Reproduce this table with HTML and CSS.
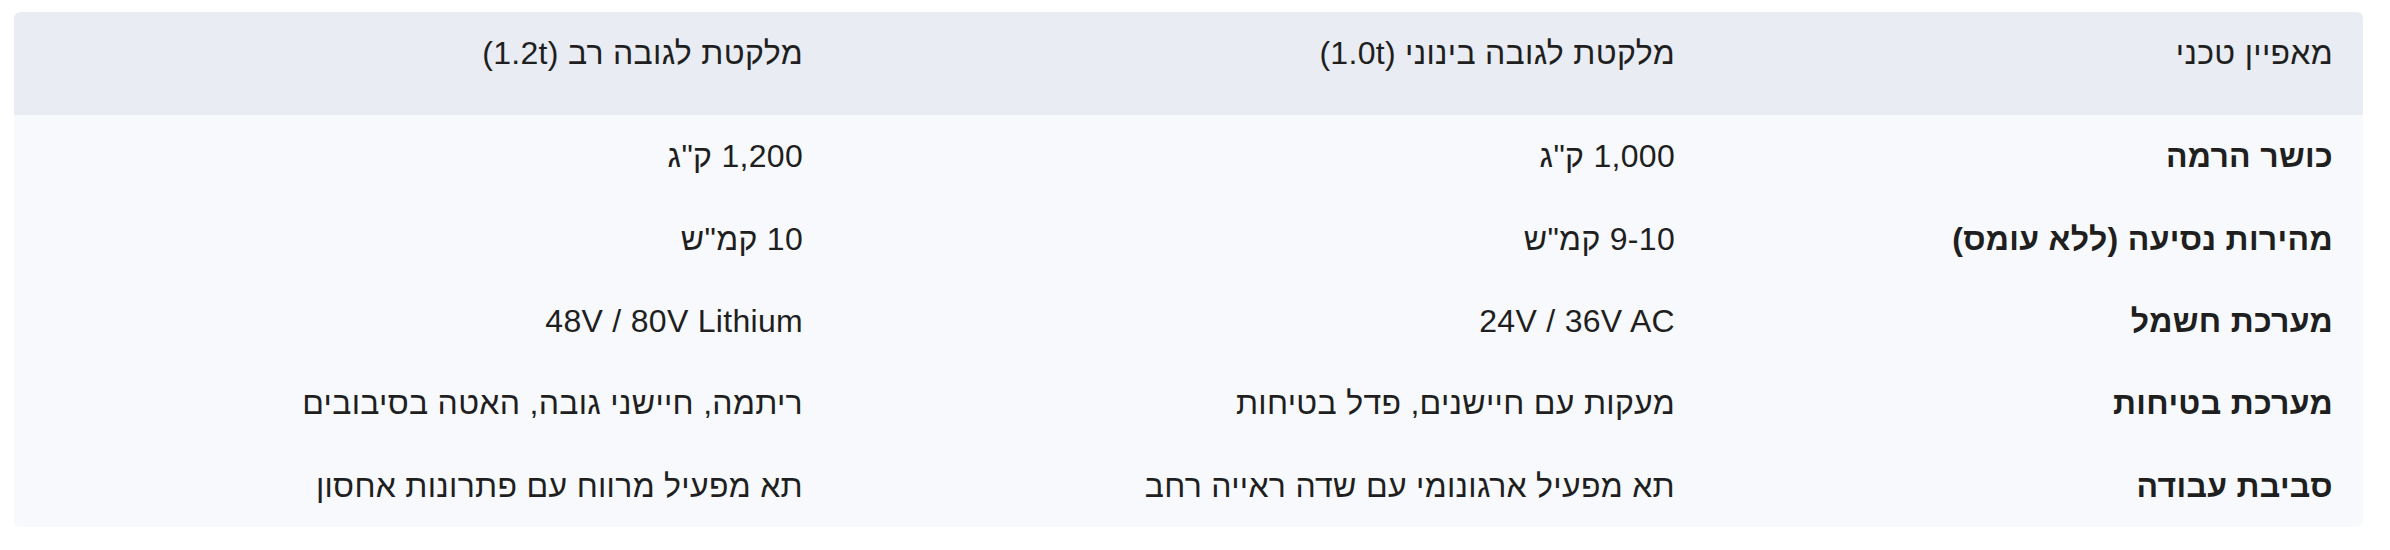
FILE: index.html
```html
<!DOCTYPE html>
<html lang="he" dir="rtl">
<head>
<meta charset="utf-8">
<link rel="stylesheet" href="styles.css">
</head>
<body>
<div class="wrap">
<table class="spec">
  <colgroup>
    <col class="c1"><col class="c2"><col class="c3">
  </colgroup>
  <thead>
    <tr>
      <th>מאפיין טכני</th>
      <th>מלקטת לגובה בינוני (1.0t)</th>
      <th>מלקטת לגובה רב (1.2t)</th>
    </tr>
  </thead>
  <tbody>
    <tr><td class="k">כושר הרמה</td><td>1,000 ק"ג</td><td>1,200 ק"ג</td></tr>
    <tr><td class="k">מהירות נסיעה (ללא עומס)</td><td>9-10 קמ"ש</td><td>10 קמ"ש</td></tr>
    <tr><td class="k">מערכת חשמל</td><td>24V / 36V AC</td><td>48V / 80V Lithium</td></tr>
    <tr><td class="k">מערכת בטיחות</td><td>מעקות עם חיישנים, פדל בטיחות</td><td>ריתמה, חיישני גובה, האטה בסיבובים</td></tr>
    <tr><td class="k">סביבת עבודה</td><td>תא מפעיל ארגונומי עם שדה ראייה רחב</td><td>תא מפעיל מרווח עם פתרונות אחסון</td></tr>
  </tbody>
</table>
</div>
</body>
</html>
```
FILE: styles.css
```css
html, body {
  margin: 0;
  padding: 0;
  background: #ffffff;
}
body {
  font-family: "Liberation Sans", "DejaVu Sans", sans-serif;
  color: #1f1f1f;
}
.wrap {
  padding: 12px 27px 0 14px;
}
.spec {
  width: 2349px;
  border-collapse: separate;
  border-spacing: 0;
  table-layout: fixed;
  border-radius: 6px;
  overflow: hidden;
  font-size: 32px;
  letter-spacing: 0.3px;
}
.c1 { width: 658px; }
.c2 { width: 872px; }
.c3 { width: 819px; }
.spec th {
  background: #e9ecf3;
  font-weight: 400;
  text-align: right;
  vertical-align: top;
  height: 103px;
  box-sizing: border-box;
  padding: 21px 30px 0 30px;
  line-height: 40px;
}
.spec td {
  background: #f8f9fc;
  text-align: right;
  height: 82.4px;
  box-sizing: border-box;
  padding: 0 30px;
  line-height: 40px;
  vertical-align: middle;
}
.spec td.k {
  font-weight: 700;
}
```
